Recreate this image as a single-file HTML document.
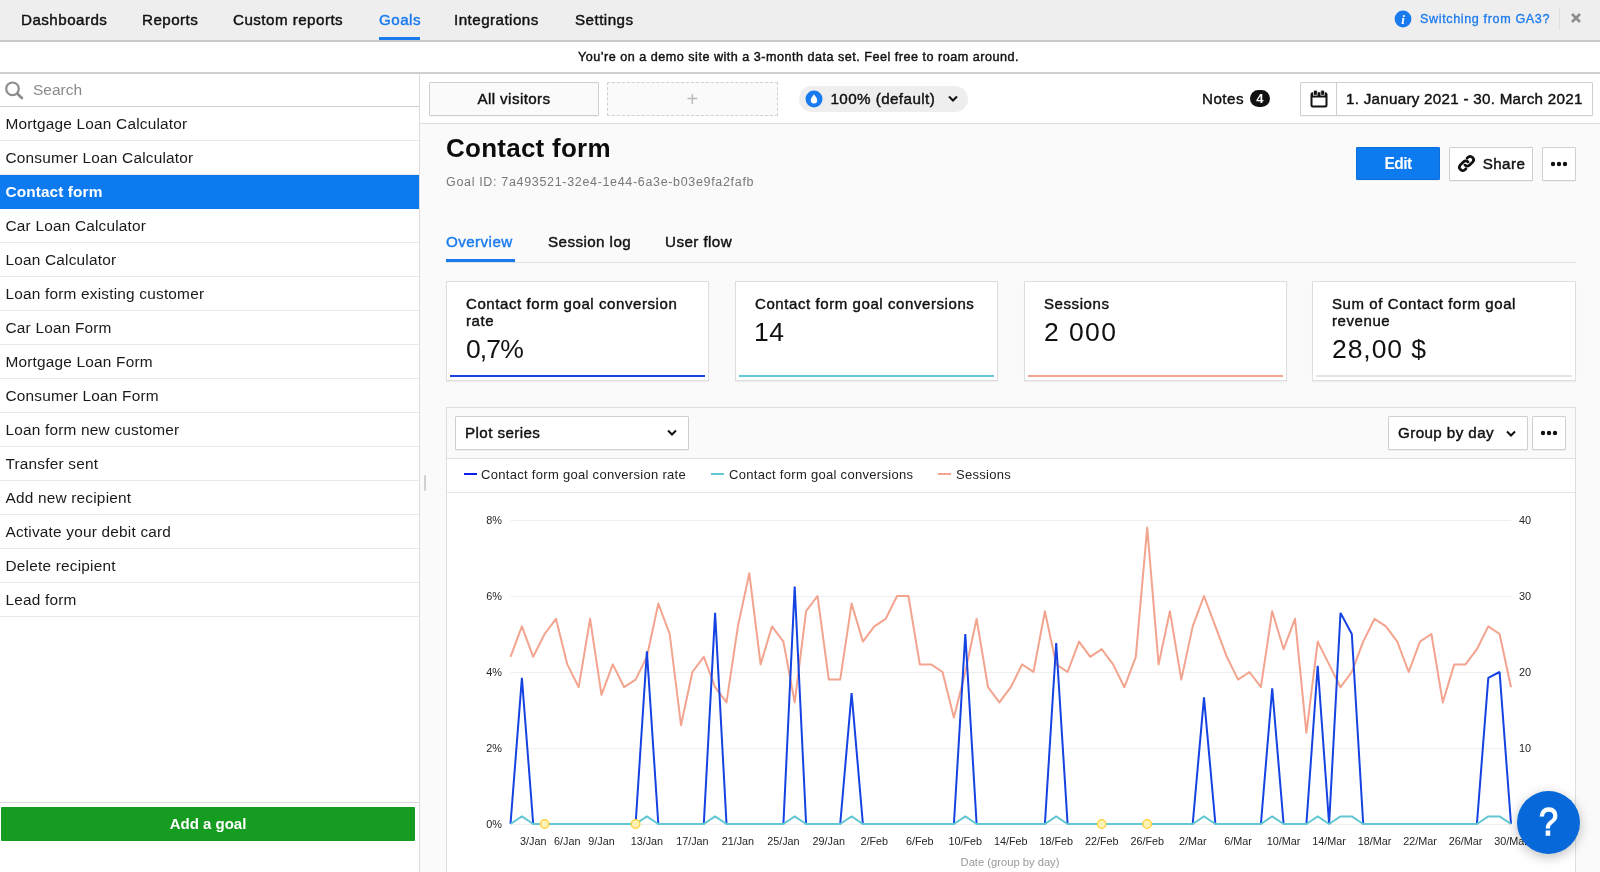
<!DOCTYPE html>
<html lang="en"><head><meta charset="utf-8"><title>Goals – Contact form</title>
<style>
*{box-sizing:border-box;margin:0;padding:0}
html,body{width:1600px;height:872px;overflow:hidden;background:#fafafa;font-family:"Liberation Sans",sans-serif;color:#111;}
body{position:relative;will-change:transform}
.abs{position:absolute}
/* top nav */
#nav{position:absolute;left:0;top:0;width:1600px;height:42px;background:#eeeeee;border-bottom:2px solid #c9c9c9}
#nav a{position:absolute;top:10px;font-size:15.2px;line-height:20px;color:#111;white-space:nowrap;text-decoration:none;-webkit-text-stroke:0.42px #111;letter-spacing:.45px}
#nav a.act{color:#1a7bef;-webkit-text-stroke:0.42px #1a7bef}
#nav .ul{position:absolute;left:379px;top:37px;width:41px;height:3px;background:#1a7bef}
#banner{position:absolute;left:0;top:42px;width:1600px;height:32px;background:#fff;border-bottom:2px solid #cfcfcf;text-align:center;font-size:12.6px;line-height:30px;-webkit-text-stroke:0.42px #111;letter-spacing:.5px;padding-right:3px}
/* sidebar */
#side{position:absolute;left:0;top:74px;width:420px;height:798px;background:#fff;border-right:1px solid #dcdcdc}
#search{position:absolute;left:0;top:0;width:419px;height:33px;border-bottom:1px solid #cfcfcf;color:#8a8a8a;font-size:15.5px;line-height:32px;padding-left:33px;letter-spacing:0}
#side ul{position:absolute;left:0;top:33px;width:419px;list-style:none}
#side li{height:34px;border-bottom:1px solid #e9e9e9;font-size:15.4px;line-height:33px;padding-left:5.5px;white-space:nowrap;letter-spacing:.2px;color:#1a1a1a}
#side li.sel{background:#0e7af0;color:#fff;font-weight:bold;border-bottom-color:#0e7af0;letter-spacing:.1px}
#addwrap{position:absolute;left:0;top:728px;width:419px;height:70px;border-top:1px solid #d8d8d8;background:#fff}
#add{position:absolute;left:1px;top:4px;width:414px;height:34px;background:#179c22;color:#fff;font-weight:bold;font-size:15px;line-height:34px;text-align:center;border-radius:1px}

/* main */
#fbar{position:absolute;left:420px;top:74px;width:1180px;height:50px;background:#fff;border-bottom:1px solid #dcdcdc}
.btn{position:absolute;height:34px;border:1px solid #cfcfcf;background:#fafafa;font-size:15.2px;line-height:32px;text-align:center;white-space:nowrap;-webkit-text-stroke:0.42px #111;letter-spacing:.4px;border-radius:1px;box-shadow:0 1px 0 rgba(0,0,0,.04)}
#pill{position:absolute;left:379px;top:12px;width:169px;height:26px;border-radius:13px;background:#eee;font-size:15.2px;line-height:26px;-webkit-text-stroke:0.42px #111;letter-spacing:.42px;padding-left:31.5px}
#title{position:absolute;left:446px;top:132px;font-size:26px;line-height:32px;font-weight:bold;white-space:nowrap;letter-spacing:.25px;color:#0d0d0d}
#gid{position:absolute;left:446px;top:174px;font-size:12.5px;line-height:16px;color:#787878;white-space:nowrap;letter-spacing:.67px}
.tab{position:absolute;top:232px;font-size:15.2px;line-height:20px;white-space:nowrap;-webkit-text-stroke:0.42px #111;letter-spacing:.42px}
.card{position:absolute;top:281px;width:263px;height:100px;background:#fff;border:1px solid #dedede;box-shadow:0 1px 1px rgba(0,0,0,.05)}
.card .t{position:absolute;left:19px;top:13px;width:232px;font-size:15px;line-height:17px;-webkit-text-stroke:0.42px #111;letter-spacing:.58px}
.card .v{position:absolute;left:19px;font-size:26.5px;line-height:30px;letter-spacing:0;color:#111;white-space:nowrap}
.card .bar{position:absolute;left:3px;right:3px;bottom:3px;height:2px}
#panel{position:absolute;left:446px;top:407px;width:1130px;height:470px;background:#fff;border:1px solid #dedede}
#phead{position:absolute;left:0;top:0;width:1128px;height:51px;background:#fafafa;border-bottom:1px solid #e1e1e1}
#legend{position:absolute;left:0;top:51px;width:1128px;height:34px;border-bottom:1px solid #e6e6e6;font-size:13px;line-height:31px;color:#222;letter-spacing:.3px}
#legend span{position:absolute;top:0;white-space:nowrap}
#legend i{position:absolute;top:14px;width:12.500px;height:2px}
</style></head><body>
<div id="nav">
<a style="left:21px">Dashboards</a><a style="left:142px">Reports</a><a style="left:233px">Custom reports</a><a class="act" style="left:379px">Goals</a><a style="left:454px">Integrations</a><a style="left:575px">Settings</a>
<div class="ul"></div>
<svg class="abs" style="left:1394px;top:10px" width="18" height="18" viewBox="0 0 18 18"><circle cx="9" cy="9" r="8.400" fill="#1a7bef"/><text x="9" y="13.500" text-anchor="middle" font-family="Liberation Serif, serif" font-style="italic" font-weight="bold" font-size="13" fill="#fff">i</text></svg>
<div class="abs" style="left:1420px;top:10px;font-size:12.600px;line-height:18px;color:#1a7bef;-webkit-text-stroke:0.300px #1a7bef;letter-spacing:.62px;white-space:nowrap">Switching from GA3?</div>
<div class="abs" style="left:1559px;top:8px;width:1px;height:22px;background:#e0e0e0"></div>
<svg class="abs" style="left:1570px;top:12px" width="12" height="12" viewBox="0 0 12 12"><path d="M2 2l8 8M10 2l-8 8" stroke="#8c8c8c" stroke-width="2.500"/></svg>
</div>
<div id="banner">You’re on a demo site with a 3-month data set. Feel free to roam around.</div>
<div id="side">
<div id="search">Search<svg class="abs" style="left:4px;top:7px" width="20" height="20" viewBox="0 0 20 20"><circle cx="8.500" cy="7.800" r="6.300" fill="none" stroke="#8e8e8e" stroke-width="2.200"/><path d="M13.200 12.600l4.600 4.400" stroke="#8e8e8e" stroke-width="2.800" stroke-linecap="round"/></svg></div>
<ul>
<li>Mortgage Loan Calculator</li><li>Consumer Loan Calculator</li><li class="sel">Contact form</li><li>Car Loan Calculator</li><li>Loan Calculator</li><li>Loan form existing customer</li><li>Car Loan Form</li><li>Mortgage Loan Form</li><li>Consumer Loan Form</li><li>Loan form new customer</li><li>Transfer sent</li><li>Add new recipient</li><li>Activate your debit card</li><li>Delete recipient</li><li>Lead form</li>
</ul>
<div id="addwrap"><div id="add">Add a goal</div></div>
</div>

<div id="fbar">
<div class="btn" style="left:9px;top:8px;width:170px">All visitors</div>
<div class="btn" style="left:187px;top:8px;width:171px;border:1px dashed #cfcfcf;color:#bbb;-webkit-text-stroke:0;font-size:20px;box-shadow:none">+</div>
<div id="pill">100% (default)
<svg class="abs" style="left:5.500px;top:4px" width="18" height="18" viewBox="0 0 18 18"><circle cx="9" cy="9" r="8.500" fill="#1a7bef"/><path d="M9 4.600c1.800 2.300 3.200 3.900 3.200 5.700a3.200 3.200 0 0 1-6.400 0c0-1.800 1.400-3.400 3.200-5.700z" fill="#fff"/></svg>
<svg class="abs" style="left:148px;top:8px" width="12" height="10" viewBox="0 0 12 10"><path d="M2 2.500l4 4 4-4" fill="none" stroke="#111" stroke-width="2"/></svg>
</div>
<div class="abs" style="left:782px;top:15px;font-size:15.2px;line-height:20px;-webkit-text-stroke:0.42px #111;letter-spacing:.45px">Notes</div>
<div class="abs" style="left:829.500px;top:16px;width:20.500px;height:17px;border-radius:8.500px;background:#111;color:#fff;font-size:13px;line-height:17px;text-align:center;font-weight:bold">4</div>
<div class="btn" style="left:880px;top:8px;width:293px;background:#fff"></div>
<div class="abs" style="left:916px;top:9px;width:1px;height:32px;background:#cfcfcf"></div>
<svg class="abs" style="left:889px;top:15px" width="20" height="20" viewBox="0 0 20 20"><rect x="2.500" y="4.200" width="15" height="13.300" rx="1.200" fill="none" stroke="#111" stroke-width="2"/><rect x="2.500" y="4.200" width="15" height="4.300" fill="#111"/><rect x="4.600" y="1.200" width="3.600" height="5" fill="#111" stroke="#fff" stroke-width=".7"/><rect x="11.800" y="1.200" width="3.600" height="5" fill="#111" stroke="#fff" stroke-width=".7"/></svg>
<div class="abs" style="left:926px;top:15px;font-size:15.2px;line-height:20px;-webkit-text-stroke:0.42px #111;letter-spacing:.27px;white-space:nowrap">1. January 2021 - 30. March 2021</div>
</div>
<div id="title">Contact form</div>
<div id="gid">Goal ID: 7a493521-32e4-1e44-6a3e-b03e9fa2fafb</div>
<div class="btn" style="left:1356px;top:146.600px;width:84.300px;height:33.300px;background:#0e7af0;border-color:#0c6fdc;color:#fff;font-weight:bold;-webkit-text-stroke:0;letter-spacing:-.55px;font-size:15.600px;line-height:31px">Edit</div>
<div class="btn" style="left:1449px;top:147px;width:84px;background:#fff;padding-left:26px">Share
<svg class="abs" style="left:6px;top:5px" width="21" height="21" viewBox="0 0 20 20"><g fill="none" stroke="#111" stroke-width="2.600" stroke-linecap="round"><path d="M8.500 11.500a3.200 3.200 0 0 0 4.500 0l3-3a3.200 3.200 0 0 0-4.500-4.500l-1 1"/><path d="M11.500 8.500a3.200 3.200 0 0 0-4.500 0l-3 3a3.200 3.200 0 0 0 4.500 4.500l1-1"/></g></svg></div>
<div class="btn" style="left:1542px;top:147px;width:34px;background:#fff"><svg class="abs" style="left:7px;top:13px" width="18" height="6" viewBox="0 0 18 6"><circle cx="3" cy="3" r="2.200" fill="#111"/><circle cx="9" cy="3" r="2.200" fill="#111"/><circle cx="15" cy="3" r="2.200" fill="#111"/></svg></div>
<div class="tab" style="left:446px;color:#1a7bef;-webkit-text-stroke-color:#1a7bef">Overview</div>
<div class="tab" style="left:548px">Session log</div>
<div class="tab" style="left:665px">User flow</div>
<div class="abs" style="left:446px;top:262px;width:1130px;height:1px;background:#e2e2e2"></div>
<div class="abs" style="left:446px;top:259px;width:69px;height:3px;background:#1a7bef"></div>
<div class="card" style="left:446px"><div class="t">Contact form goal conversion rate</div><div class="v" style="top:51.500px;letter-spacing:-.9px">0,7%</div><div class="bar" style="background:#1443e2"></div></div>
<div class="card" style="left:735px"><div class="t">Contact form goal conversions</div><div class="v" style="top:34.500px;left:18px;letter-spacing:.4px">14</div><div class="bar" style="background:#63c8d3"></div></div>
<div class="card" style="left:1024px"><div class="t">Sessions</div><div class="v" style="top:34.500px;letter-spacing:1.4px">2 000</div><div class="bar" style="background:#f3a48f"></div></div>
<div class="card" style="left:1312px;width:264px"><div class="t">Sum of Contact form goal revenue</div><div class="v" style="top:51.500px;letter-spacing:.93px">28,00 $</div><div class="bar" style="background:#e3e3e3"></div></div>
<div id="panel">
<div id="phead">
<div class="btn" style="left:8px;top:8px;width:234px;background:#fff;text-align:left;padding-left:9px">Plot series<svg class="abs" style="left:210px;top:11px" width="12" height="10" viewBox="0 0 12 10"><path d="M2 2.500l4 4 4-4" fill="none" stroke="#111" stroke-width="2"/></svg></div>
<div class="btn" style="left:941px;top:8px;width:140px;background:#fff;text-align:left;padding-left:9px">Group by day<svg class="abs" style="left:116px;top:12px" width="12" height="10" viewBox="0 0 12 10"><path d="M2 2.500l4 4 4-4" fill="none" stroke="#111" stroke-width="2"/></svg></div>
<div class="btn" style="left:1085px;top:8px;width:34px;background:#fff"><svg class="abs" style="left:7px;top:13px" width="18" height="6" viewBox="0 0 18 6"><circle cx="3" cy="3" r="2.200" fill="#111"/><circle cx="9" cy="3" r="2.200" fill="#111"/><circle cx="15" cy="3" r="2.200" fill="#111"/></svg></div>
</div>
<div id="legend">
<i style="left:17px;background:#0a20e6"></i><span style="left:34px">Contact form goal conversion rate</span>
<i style="left:264px;background:#63c8d3"></i><span style="left:282px">Contact form goal conversions</span>
<i style="left:491px;background:#f3a48f"></i><span style="left:509px">Sessions</span>
</div>
<!--CHART--><svg class="abs" style="left:0;top:84px" width="1128" height="384" viewBox="0 0 1128 384" font-family="Liberation Sans, sans-serif" font-size="10.900" fill="#262626">
<line x1="63.5" x2="1064.0" y1="332.5" y2="332.5" stroke="#eeeeee" stroke-width="1"/>
<text x="55.0" y="336.1" text-anchor="end">0%</text>
<text x="1072.0" y="336.1"None>0</text>
<line x1="63.5" x2="1064.0" y1="256.5" y2="256.5" stroke="#eeeeee" stroke-width="1"/>
<text x="55.0" y="260.1" text-anchor="end">2%</text>
<text x="1072.0" y="260.1"None>10</text>
<line x1="63.5" x2="1064.0" y1="180.5" y2="180.5" stroke="#eeeeee" stroke-width="1"/>
<text x="55.0" y="184.1" text-anchor="end">4%</text>
<text x="1072.0" y="184.1"None>20</text>
<line x1="63.5" x2="1064.0" y1="104.5" y2="104.5" stroke="#eeeeee" stroke-width="1"/>
<text x="55.0" y="108.1" text-anchor="end">6%</text>
<text x="1072.0" y="108.1"None>30</text>
<line x1="63.5" x2="1064.0" y1="28.5" y2="28.5" stroke="#eeeeee" stroke-width="1"/>
<text x="55.0" y="32.1" text-anchor="end">8%</text>
<text x="1072.0" y="32.1"None>40</text>
<polyline fill="none" stroke="#f3a48f" stroke-width="2" stroke-linejoin="round" points="63.5,164.8 74.9,134.4 86.2,164.8 97.6,142.0 109.0,126.8 120.3,172.4 131.7,195.2 143.1,126.8 154.5,202.8 165.8,172.4 177.2,195.2 188.6,187.6 199.9,164.8 211.3,111.6 222.7,142.0 234.0,233.2 245.4,180.0 256.8,164.8 268.1,195.2 279.5,210.4 290.9,134.4 302.3,81.2 313.6,172.4 325.0,134.4 336.4,149.6 347.7,210.4 359.1,119.2 370.5,104.0 381.8,187.6 393.2,187.6 404.6,111.6 415.9,149.6 427.3,134.4 438.7,126.8 450.1,104.0 461.4,104.0 472.8,172.4 484.2,172.4 495.5,180.0 506.9,225.6 518.3,180.0 529.6,126.8 541.0,195.2 552.4,210.4 563.8,195.2 575.1,172.4 586.5,180.0 597.9,119.2 609.2,172.4 620.6,180.0 632.0,149.6 643.3,164.8 654.7,157.2 666.1,172.4 677.4,195.2 688.8,164.8 700.2,35.6 711.6,172.4 722.9,119.2 734.3,187.6 745.7,134.4 757.0,104.0 768.4,134.4 779.8,164.8 791.1,187.6 802.5,180.0 813.9,195.2 825.2,119.2 836.6,157.2 848.0,126.8 859.4,240.8 870.7,149.6 882.1,172.4 893.5,195.2 904.8,180.0 916.2,149.6 927.6,126.8 938.9,134.4 950.3,149.6 961.7,180.0 973.0,149.6 984.4,142.0 995.8,210.4 1007.2,172.4 1018.5,172.4 1029.9,157.2 1041.3,134.4 1052.6,142.0 1064.0,195.2"/>
<polyline fill="none" stroke="#1443e2" stroke-width="2" stroke-linejoin="bevel" points="63.5,332.0 74.9,185.8 86.2,332.0 97.6,332.0 109.0,332.0 120.3,332.0 131.7,332.0 143.1,332.0 154.5,332.0 165.8,332.0 177.2,332.0 188.6,332.0 199.9,159.3 211.3,332.0 222.7,332.0 234.0,332.0 245.4,332.0 256.8,332.0 268.1,120.9 279.5,332.0 290.9,332.0 302.3,332.0 313.6,332.0 325.0,332.0 336.4,332.0 347.7,94.5 359.1,332.0 370.5,332.0 381.8,332.0 393.2,332.0 404.6,201.0 415.9,332.0 427.3,332.0 438.7,332.0 450.1,332.0 461.4,332.0 472.8,332.0 484.2,332.0 495.5,332.0 506.9,332.0 518.3,142.0 529.6,332.0 541.0,332.0 552.4,332.0 563.8,332.0 575.1,332.0 586.5,332.0 597.9,332.0 609.2,151.0 620.6,332.0 632.0,332.0 643.3,332.0 654.7,332.0 666.1,332.0 677.4,332.0 688.8,332.0 700.2,332.0 711.6,332.0 722.9,332.0 734.3,332.0 745.7,332.0 757.0,205.3 768.4,332.0 779.8,332.0 791.1,332.0 802.5,332.0 813.9,332.0 825.2,196.3 836.6,332.0 848.0,332.0 859.4,332.0 870.7,173.7 882.1,332.0 893.5,120.9 904.8,142.0 916.2,332.0 927.6,332.0 938.9,332.0 950.3,332.0 961.7,332.0 973.0,332.0 984.4,332.0 995.8,332.0 1007.2,332.0 1018.5,332.0 1029.9,332.0 1041.3,185.8 1052.6,180.0 1064.0,332.0"/>
<polyline fill="none" stroke="#63c8d3" stroke-width="2" stroke-linejoin="round" points="63.5,332.0 74.9,324.4 86.2,332.0 97.6,332.0 109.0,332.0 120.3,332.0 131.7,332.0 143.1,332.0 154.5,332.0 165.8,332.0 177.2,332.0 188.6,332.0 199.9,324.4 211.3,332.0 222.7,332.0 234.0,332.0 245.4,332.0 256.8,332.0 268.1,324.4 279.5,332.0 290.9,332.0 302.3,332.0 313.6,332.0 325.0,332.0 336.4,332.0 347.7,324.4 359.1,332.0 370.5,332.0 381.8,332.0 393.2,332.0 404.6,324.4 415.9,332.0 427.3,332.0 438.7,332.0 450.1,332.0 461.4,332.0 472.8,332.0 484.2,332.0 495.5,332.0 506.9,332.0 518.3,324.4 529.6,332.0 541.0,332.0 552.4,332.0 563.8,332.0 575.1,332.0 586.5,332.0 597.9,332.0 609.2,324.4 620.6,332.0 632.0,332.0 643.3,332.0 654.7,332.0 666.1,332.0 677.4,332.0 688.8,332.0 700.2,332.0 711.6,332.0 722.9,332.0 734.3,332.0 745.7,332.0 757.0,324.4 768.4,332.0 779.8,332.0 791.1,332.0 802.5,332.0 813.9,332.0 825.2,324.4 836.6,332.0 848.0,332.0 859.4,332.0 870.7,324.4 882.1,332.0 893.5,324.4 904.8,324.4 916.2,332.0 927.6,332.0 938.9,332.0 950.3,332.0 961.7,332.0 973.0,332.0 984.4,332.0 995.8,332.0 1007.2,332.0 1018.5,332.0 1029.9,332.0 1041.3,324.4 1052.6,324.4 1064.0,332.0"/>
<circle cx="97.6" cy="332.0" r="4.300" fill="#fff1b3" stroke="#fbd030" stroke-width="1.200"/>
<circle cx="188.6" cy="332.0" r="4.300" fill="#fff1b3" stroke="#fbd030" stroke-width="1.200"/>
<circle cx="654.7" cy="332.0" r="4.300" fill="#fff1b3" stroke="#fbd030" stroke-width="1.200"/>
<circle cx="700.2" cy="332.0" r="4.300" fill="#fff1b3" stroke="#fbd030" stroke-width="1.200"/>
<text x="86.2" y="353.4" text-anchor="middle" font-size="10.800">3/Jan</text>
<text x="120.3" y="353.4" text-anchor="middle" font-size="10.800">6/Jan</text>
<text x="154.5" y="353.4" text-anchor="middle" font-size="10.800">9/Jan</text>
<text x="199.9" y="353.4" text-anchor="middle" font-size="10.800">13/Jan</text>
<text x="245.4" y="353.4" text-anchor="middle" font-size="10.800">17/Jan</text>
<text x="290.9" y="353.4" text-anchor="middle" font-size="10.800">21/Jan</text>
<text x="336.4" y="353.4" text-anchor="middle" font-size="10.800">25/Jan</text>
<text x="381.8" y="353.4" text-anchor="middle" font-size="10.800">29/Jan</text>
<text x="427.3" y="353.4" text-anchor="middle" font-size="10.800">2/Feb</text>
<text x="472.8" y="353.4" text-anchor="middle" font-size="10.800">6/Feb</text>
<text x="518.3" y="353.4" text-anchor="middle" font-size="10.800">10/Feb</text>
<text x="563.8" y="353.4" text-anchor="middle" font-size="10.800">14/Feb</text>
<text x="609.2" y="353.4" text-anchor="middle" font-size="10.800">18/Feb</text>
<text x="654.7" y="353.4" text-anchor="middle" font-size="10.800">22/Feb</text>
<text x="700.2" y="353.4" text-anchor="middle" font-size="10.800">26/Feb</text>
<text x="745.7" y="353.4" text-anchor="middle" font-size="10.800">2/Mar</text>
<text x="791.1" y="353.4" text-anchor="middle" font-size="10.800">6/Mar</text>
<text x="836.6" y="353.4" text-anchor="middle" font-size="10.800">10/Mar</text>
<text x="882.1" y="353.4" text-anchor="middle" font-size="10.800">14/Mar</text>
<text x="927.6" y="353.4" text-anchor="middle" font-size="10.800">18/Mar</text>
<text x="973.0" y="353.4" text-anchor="middle" font-size="10.800">22/Mar</text>
<text x="1018.5" y="353.4" text-anchor="middle" font-size="10.800">26/Mar</text>
<text x="1064.0" y="353.4" text-anchor="middle" font-size="10.800">30/Mar</text>
<text x="563.0" y="373.8" text-anchor="middle" fill="#999" font-size="11.200">Date (group by day)</text>
</svg><!--/CHART-->
</div>
<div class="abs" style="left:1517px;top:791px;width:63px;height:63px;border-radius:50%;background:#0668d9;color:#fff;font-size:38px;line-height:62px;text-align:center;-webkit-text-stroke:1.300px #fff;box-shadow:0 3px 12px rgba(0,0,0,.26)"><span style="display:inline-block;transform:scaleX(.9)">?</span></div>
<div class="abs" style="left:423.500px;top:475px;width:2px;height:16px;background:#d0d0d0;border-radius:1px"></div>
</body></html>
